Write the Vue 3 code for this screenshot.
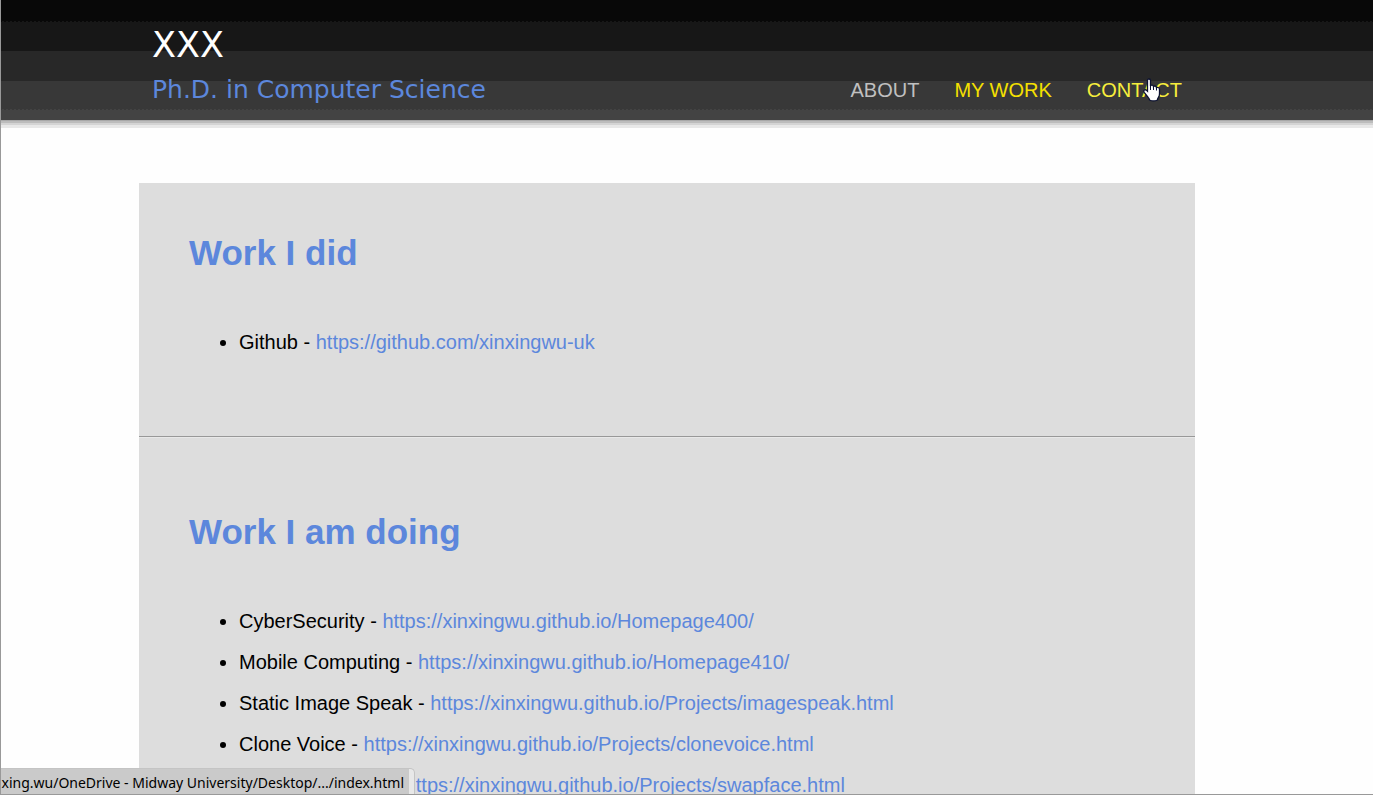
<script setup>
const nav = [
  { label: 'ABOUT', href: '#about', tone: 'plain' },
  { label: 'MY WORK', href: '#work', tone: 'current' },
  { label: 'CONTACT', href: '#contact', tone: 'hovered' }
]

const sections = [
  {
    title: 'Work I did',
    items: [{ name: 'Github', url: 'https://github.com/xinxingwu-uk' }]
  },
  {
    title: 'Work I am doing',
    items: [
      { name: 'CyberSecurity', url: 'https://xinxingwu.github.io/Homepage400/' },
      { name: 'Mobile Computing', url: 'https://xinxingwu.github.io/Homepage410/' },
      { name: 'Static Image Speak', url: 'https://xinxingwu.github.io/Projects/imagespeak.html' },
      { name: 'Clone Voice', url: 'https://xinxingwu.github.io/Projects/clonevoice.html' },
      { name: 'Swapping Faces', url: 'https://xinxingwu.github.io/Projects/swapface.html' }
    ]
  }
]
</script>

<template>
  <div class="page">
    <header class="banner">
      <div class="banner-inner">
        <div class="brand">
          <h1>XXX</h1>
          <p>Ph.D. in Computer Science</p>
        </div>
        <nav>
          <a v-for="link in nav" :key="link.label" :href="link.href" :class="link.tone">
            {{ link.label }}
            <svg v-if="link.tone === 'hovered'" class="pointer" viewBox="0 0 18 24" aria-hidden="true">
              <path
                d="M4.500 2.500Q4.500 1 6 1T7.500 2.500V8Q8 6.800 9.200 7.100Q10.400 7.400 10.500 8.600Q11.100 7.700 12.300 8.100Q13.400 8.500 13.500 9.700Q14.300 9 15.300 9.500Q16.500 10 16.500 11.500V16Q16.500 18 15.300 19.700Q14.500 20.900 14.500 22Q10.500 23.800 6.500 22Q6.400 20.700 5.200 19.300L1.200 14.300Q.3 12.800 1.400 12Q2.400 11.400 3.500 12.300L4.500 13.300Z"
              />
              <path class="crease" d="M7.500 8V12M10.500 8.600V12M13.500 9.700V12.500" />
            </svg>
          </a>
        </nav>
      </div>
    </header>

    <main>
      <section v-for="section in sections" :key="section.title">
        <h2>{{ section.title }}</h2>
        <ul>
          <li v-for="item in section.items" :key="item.url">
            {{ item.name }} - <a :href="item.url">{{ item.url }}</a>
          </li>
        </ul>
      </section>
    </main>

    <div class="status"><span>xing.wu/OneDrive - Midway University/Desktop/.../index.html</span></div>
    <div class="frame"></div>
  </div>
</template>

<style>
body {
  margin: 0;
  background: #fefefe;
}
</style>

<style scoped>
.page {
  height: 100vh;
  overflow: hidden;
  font-family: "Liberation Sans", Arial, sans-serif;
  font-size: 20px;
  color: #000;
}

.banner {
  box-sizing: border-box;
  height: 128px;
  background:
    repeating-linear-gradient(90deg, #080808 0 2px, #171717 2px 4px) 0 21px / 100% 1px no-repeat,
    repeating-linear-gradient(90deg, #383838 0 2px, #434343 2px 4px) 0 109px / 100% 1px no-repeat,
    linear-gradient(
      #080808 0 21px, #171717 21px 51px, #282828 51px 81px, #383838 81px 109px,
      #434343 109px 120px, #a8a8a8 120px 121px, #bcbcbc 121px 123px,
      #d4d4d4 123px 125px, #e8e8e8 125px 128px
    );
}

.banner-inner {
  display: flex;
  justify-content: space-between;
  align-items: flex-end;
  height: 110px;
  margin: 0 191px 0 152px;
}

.brand {
  font-family: "DejaVu Sans", Verdana, sans-serif;
}

h1 {
  margin: 0;
  color: #fff;
  font-size: 35px;
  font-weight: 400;
  line-height: 50px;
}

.brand p {
  margin: 0;
  color: #5c87dc;
  font-size: 25px;
  line-height: 40px;
}

nav {
  display: flex;
  gap: 35px;
  line-height: 40px;
}

nav a {
  position: relative;
  color: #c0c0c0;
  text-decoration: none;
}

nav .current {
  color: #f5e000;
}

nav .hovered {
  color: #f7ee3c;
}

.pointer {
  position: absolute;
  left: 56px;
  top: 8px;
  width: 18px;
  height: 24px;
  fill: #fff;
  stroke: #0a1030;
  stroke-width: 1.3;
}

.pointer .crease {
  fill: none;
  stroke-width: 1;
}

main {
  margin: 55px 178px 0 139px;
  background: #ddd;
}

section {
  box-sizing: border-box;
  padding: 50px 50px 73px;
}

section + section {
  border-top: 1px solid #989898;
  box-shadow: inset 0 1px #e8e8e8;
  padding-top: 75px;
}

h2 {
  margin: 0;
  color: #5c87dc;
  font-size: 35px;
  line-height: 40px;
}

ul {
  margin: 49px 0 0;
  padding: 0 0 0 50px;
}

li {
  line-height: 41px;
}

li a {
  color: #5c87dc;
  text-decoration: none;
}

.status {
  position: fixed;
  left: 0;
  bottom: 0;
  box-sizing: border-box;
  display: flex;
  justify-content: flex-end;
  width: 415px;
  height: 27px;
  padding-right: 5px;
  overflow: hidden;
  border: solid #c4c4c4;
  border-width: 1px 1px 0 0;
  border-radius: 0 5px 0 0;
  background: #e8e8e8;
  font: 14px/28px "Noto Sans", "Segoe UI", sans-serif;
  white-space: nowrap;
}

.status span {
  display: flex;
  flex: 1;
  justify-content: flex-end;
  padding-right: 5px;
  background: #cacaca;
}

.frame {
  position: fixed;
  inset: 0;
  border: solid #999;
  border-width: 0 0 1px 1px;
  pointer-events: none;
}
</style>
